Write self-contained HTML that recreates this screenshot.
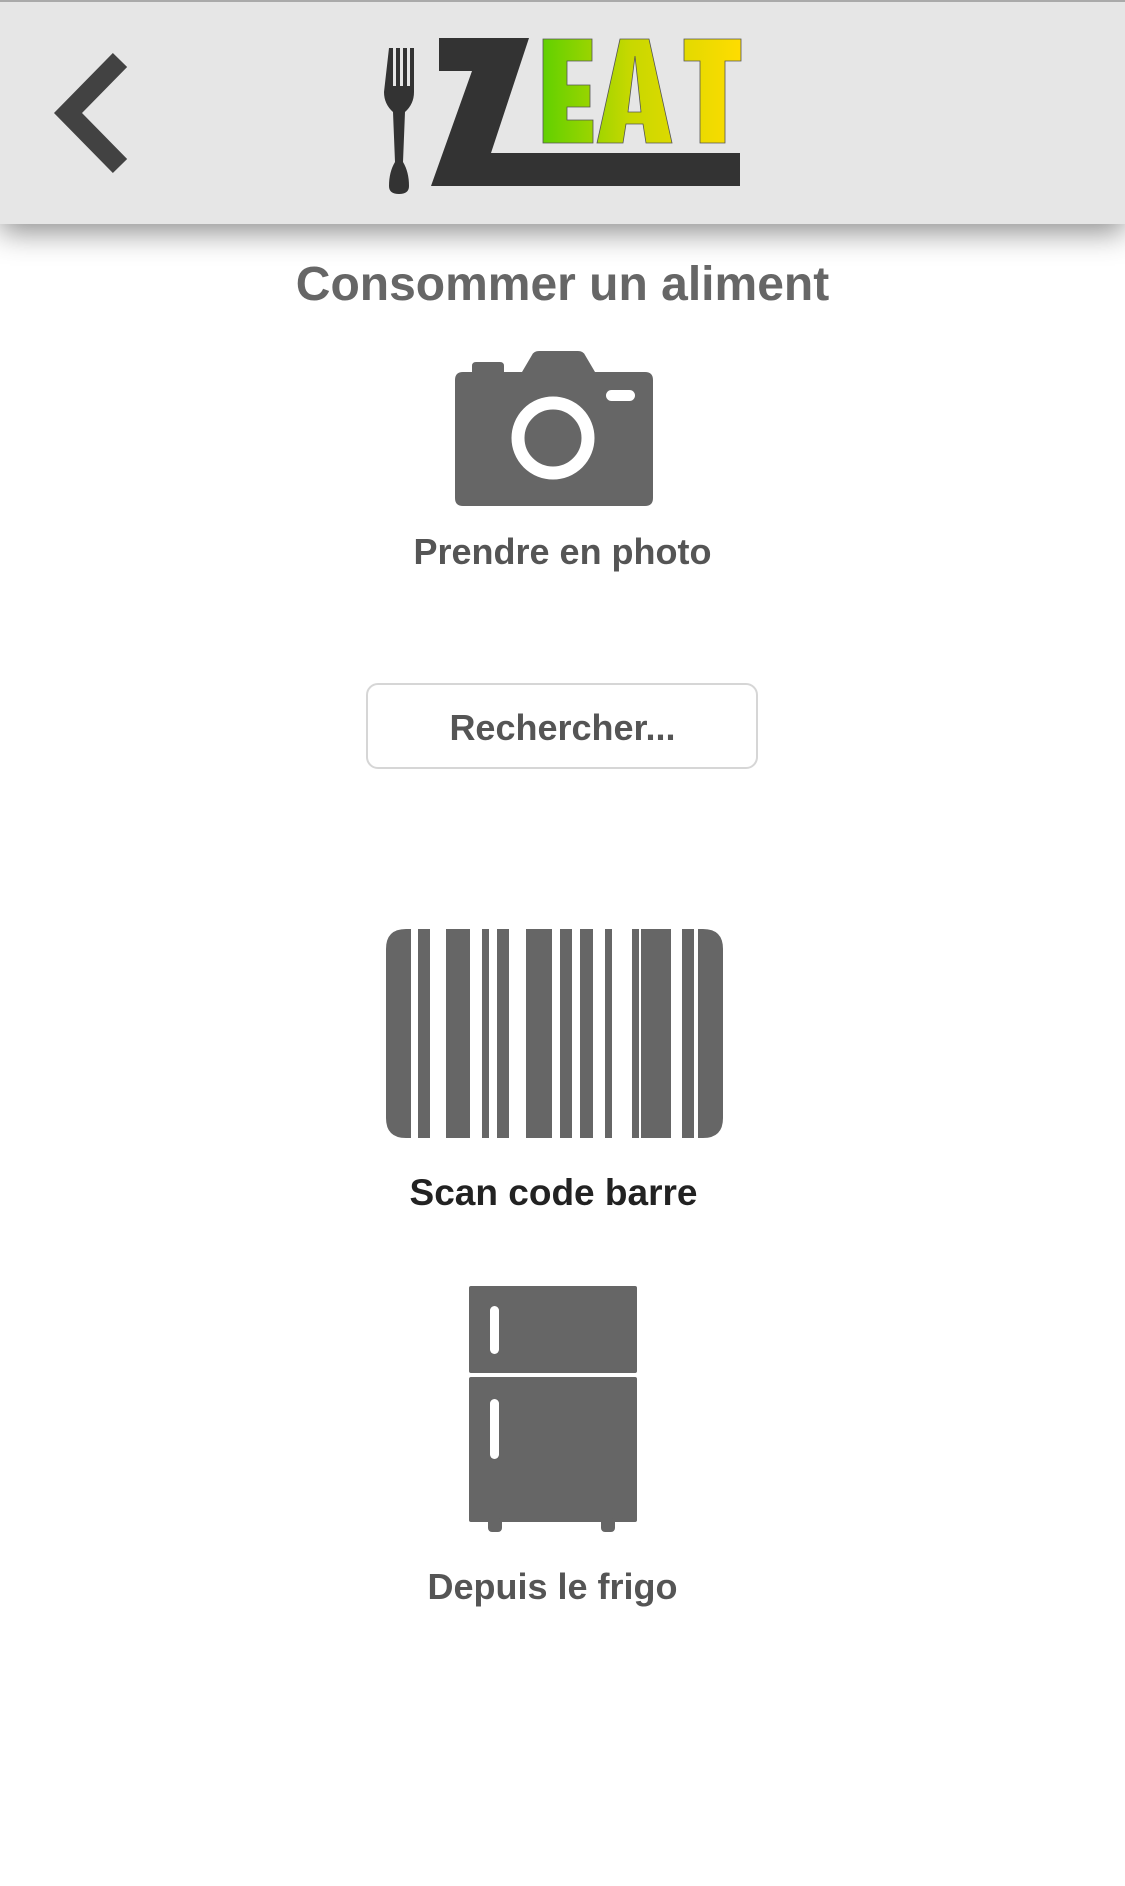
<!DOCTYPE html>
<html><head><meta charset="utf-8"><style>
body{margin:0;width:1125px;height:1886px;background:#fff;position:relative;overflow:hidden;font-family:"Liberation Sans",sans-serif;}
.hdr{position:absolute;left:0;top:0;width:1125px;height:224px;background:#e6e6e6;border-top:2px solid #aaa;box-sizing:border-box;box-shadow:0 8px 28px rgba(0,0,0,0.45);}
.t{position:absolute;left:0;width:1125px;text-align:center;font-weight:bold;}
.box{position:absolute;left:366px;top:683px;width:392px;height:86px;border:2px solid #d6d6d6;border-radius:12px;box-sizing:border-box;}
</style></head><body>
<div class="hdr"></div>
<svg style="position:absolute;left:0;top:0" width="1125" height="260">
<polyline points="120,60 68,113 120,166" fill="none" stroke="#424242" stroke-width="20"/>
<path d="M389,48 h4 v38 h3 v-38 h4 v38 h3 v-38 h4 v38 h3 v-38 h4 v44 q0,12 -9,20 l-2,50 q6,10 6,24 q0,8 -10,8 q-10,0 -10,-8 q0,-14 6,-24 l-2,-50 q-9,-8 -9,-20 z" fill="#333"/>
<polygon points="439,38 529,38 491,153 740,153 740,186 431,186 472,71 439,71" fill="#333"/>
<defs><linearGradient id="g" gradientUnits="userSpaceOnUse" x1="541" y1="0" x2="741" y2="0"><stop offset="0" stop-color="#5fd000"/><stop offset="0.45" stop-color="#c8d800"/><stop offset="1" stop-color="#ffdc00"/></linearGradient></defs>
<g fill="url(#g)" stroke="#555" stroke-width="0.8">
<path d="M543,39 h49 v22 h-25 v24 h23 v22 h-23 v13 h26 v23 h-50 z"/>
<path d="M620,39 h29 l23,104 h-26 l-3,-19 h-17 l-3,19 h-26 z M628,112 h13 l-6,-56 z" fill-rule="evenodd"/>
<path d="M684,39 h57 v22 h-16 v82 h-25 v-82 h-16 z"/>
</g>
</svg>
<div class="t" style="top:257px;font-size:48px;color:#666;">Consommer un aliment</div>
<svg style="position:absolute;left:0;top:340px" width="1125" height="180">
<g transform="translate(0,-340)">
<path d="M472,372 v-6 q0,-4 4,-4 h24 q4,0 4,4 v6 h18 l10,-17 q2,-4 7,-4 h39 q5,0 7,4 l10,17 h50 q8,0 8,8 v118 q0,8 -8,8 h-182 q-8,0 -8,-8 v-118 q0,-8 8,-8 z" fill="#666"/>
<circle cx="553" cy="438" r="35" fill="none" stroke="#fff" stroke-width="13"/>
<rect x="606" y="390" width="29" height="11" rx="5.5" fill="#fff"/>
</g></svg>
<div class="t" style="top:531px;font-size:36px;color:#555;">Prendre en photo</div>
<div class="box"></div>
<div class="t" style="top:707px;font-size:36px;color:#555;">Rechercher...</div>
<svg style="position:absolute;left:0;top:0" width="1125" height="1600">
<g fill="#666">
<path d="M411,929 h-5 q-20,0 -20,20 v169 q0,20 20,20 h5 z"/>
<rect x="418" y="929" width="12" height="209"/>
<rect x="446" y="929" width="24" height="209"/>
<rect x="482" y="929" width="7" height="209"/>
<rect x="497" y="929" width="12" height="209"/>
<rect x="526" y="929" width="26" height="209"/>
<rect x="560" y="929" width="12" height="209"/>
<rect x="580" y="929" width="13" height="209"/>
<rect x="605" y="929" width="7" height="209"/>
<rect x="632" y="929" width="7" height="209"/>
<rect x="641" y="929" width="30" height="209"/>
<rect x="682" y="929" width="12" height="209"/>
<path d="M698,929 h5 q20,0 20,20 v169 q0,20 -20,20 h-5 z"/>
<rect x="469" y="1286" width="168" height="87" rx="2"/>
<rect x="469" y="1377" width="168" height="145" rx="2"/>
<rect x="488" y="1518" width="14" height="14" rx="4"/>
<rect x="601" y="1518" width="14" height="14" rx="4"/>
</g>
<rect x="490" y="1306" width="9" height="48" rx="4.5" fill="#fff"/>
<rect x="490" y="1399" width="9" height="60" rx="4.5" fill="#fff"/>
</svg>
<div class="t" style="top:1172px;left:-9px;font-size:37px;color:#222;">Scan code barre</div>
<div class="t" style="top:1566px;left:-10px;font-size:36px;color:#555;">Depuis le frigo</div>
</body></html>
